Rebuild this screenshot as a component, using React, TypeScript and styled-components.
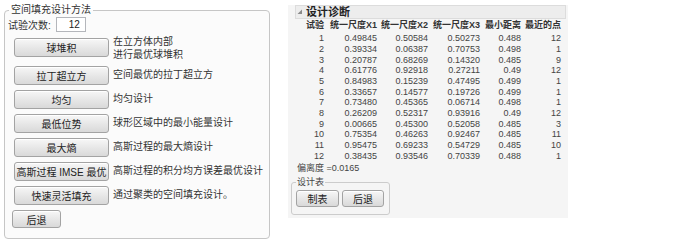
import React from "react";
import styled, { createGlobalStyle } from "styled-components";

const Global = createGlobalStyle`
  html, body { margin: 0; padding: 0; background: #ffffff; }
  body {
    font-family: "Liberation Sans", "Noto Sans CJK SC", sans-serif;
    font-size: 10px;
    color: #333;
  }
`;

const Page = styled.div`
  display: flex;
  align-items: flex-start;
  width: 700px;
  height: 245px;
`;

const MethodBox = styled.fieldset`
  box-sizing: border-box;
  width: 266px;
  margin: 3px 0 0 4px;
  padding: 0 3px 10px 3px;
  border: 1px solid #c6c6c6;
  border-radius: 4px;
  background: #fbfbfb;
  min-width: 0;
`;

const Legend = styled.legend<{ $size?: number }>`
  margin-left: 1px;
  padding: 0 2px;
  font-size: ${(p) => p.$size ?? 10}px;
  line-height: ${(p) => (p.$size ?? 10) + 4}px;
  color: #333;
`;

const CountRow = styled.div`
  display: flex;
  align-items: center;
  height: 15px;
  gap: 5px;
`;

const CountLabel = styled.span`
  font-size: 10px;
  color: #333;
`;

const CountInput = styled.div`
  box-sizing: border-box;
  width: 30px;
  height: 15px;
  border: 1px solid #b4b6bb;
  background: #fff;
  text-align: right;
  padding-right: 5px;
  line-height: 13px;
  font-size: 10px;
  color: #222;
`;

const Methods = styled.div`
  display: grid;
  grid-template-columns: 95px 1fr;
  column-gap: 4px;
  row-gap: 5px;
  margin: 4px 0 0 6px;
`;

const Btn = styled.div<{ $w?: number; $h?: number; $top?: number }>`
  box-sizing: border-box;
  width: ${(p) => p.$w ?? 95}px;
  height: ${(p) => p.$h ?? 19}px;
  margin-top: ${(p) => p.$top ?? 0}px;
  align-self: ${(p) => (p.$top ? "start" : "center")};
  border: 1px solid #a3a3a3;
  border-radius: 3px;
  background: linear-gradient(#f7f7f7, #e6e6e6 55%, #d9d9d9);
  box-shadow: inset 0 1px 0 #ffffff;
  display: flex;
  align-items: center;
  justify-content: center;
  white-space: nowrap;
  overflow: visible;
  font-size: 10px;
  color: #222;
`;

const Desc = styled.div`
  align-self: center;
  line-height: 12.5px;
  font-size: 10px;
  color: #333;
  white-space: nowrap;
`;

const BackBtn = styled(Btn)`
  margin: 5px 0 0 4px;
`;

const Report = styled.section`
  box-sizing: border-box;
  width: 280px;
  height: 213px;
  margin: 5px 0 0 18px;
  background: #f5f5f5;
  display: flex;
  flex-direction: column;
`;

const HeaderBar = styled.div`
  box-sizing: border-box;
  margin-left: 7px;
  width: 271px;
  height: 14px;
  background: #ededed;
  border: 1px solid #dcdcdc;
  display: flex;
  align-items: center;
  gap: 2px;
`;

const Title = styled.span`
  font-size: 11px;
  font-weight: bold;
  color: #222;
  line-height: 12px;
`;

const Table = styled.div`
  display: grid;
  grid-template-columns: 24px 53px 51px 52px 41px 40px;
  grid-template-rows: 13.4px;
  grid-auto-rows: 10.66px;
  justify-items: end;
  margin: 1px 0 0 12px;
`;

const HeadCell = styled.div`
  font-size: 9px;
  font-weight: bold;
  line-height: 11px;
  color: #333;
  white-space: nowrap;
  align-self: start;
`;

const Cell = styled.div`
  font-size: 9px;
  line-height: 10.66px;
  color: #444;
  white-space: nowrap;
`;

const Discrepancy = styled.div`
  margin: 2px 0 0 9px;
  font-size: 9px;
  line-height: 10px;
  color: #444;
`;

const TableBox = styled.fieldset`
  box-sizing: border-box;
  width: 99px;
  margin: 4px 0 0 3px;
  padding: 0 4px 7px 4px;
  border: 1px solid #cccccc;
  border-radius: 3px;
  min-width: 0;
`;

const SmallLegend = styled.legend`
  margin-left: 0;
  padding: 0 1px;
  font-size: 9px;
  line-height: 10px;
  color: #444;
`;

const BtnRow = styled.div`
  display: flex;
  gap: 3px;
  margin-top: 3px;
`;

const Disclosure = () => (
  <svg width="8" height="8" viewBox="0 0 8 8">
    <path d="M6 1.5 L6 6 L1.5 6 Z" fill="#8a8a8a" />
  </svg>
);

const methods: { name: string; desc: string[] }[] = [
  { name: "球堆积", desc: ["在立方体内部", "进行最优球堆积"] },
  { name: "拉丁超立方", desc: ["空间最优的拉丁超立方"] },
  { name: "均匀", desc: ["均匀设计"] },
  { name: "最低位势", desc: ["球形区域中的最小能量设计"] },
  { name: "最大熵", desc: ["高斯过程的最大熵设计"] },
  { name: "高斯过程 IMSE 最优", desc: ["高斯过程的积分均方误差最优设计"] },
  { name: "快速灵活填充", desc: ["通过聚类的空间填充设计。"] },
];

const rows: string[][] = [
  ["1", "0.49845", "0.50584", "0.50273", "0.488", "12"],
  ["2", "0.39334", "0.06387", "0.70753", "0.498", "1"],
  ["3", "0.20787", "0.68269", "0.14320", "0.485", "9"],
  ["4", "0.61776", "0.92918", "0.27211", "0.49", "12"],
  ["5", "0.84983", "0.15239", "0.47495", "0.499", "1"],
  ["6", "0.33657", "0.14577", "0.19726", "0.499", "1"],
  ["7", "0.73480", "0.45365", "0.06714", "0.498", "1"],
  ["8", "0.26209", "0.52317", "0.93916", "0.49", "12"],
  ["9", "0.00665", "0.45300", "0.52058", "0.485", "3"],
  ["10", "0.75354", "0.46263", "0.92467", "0.485", "11"],
  ["11", "0.95475", "0.69233", "0.54729", "0.485", "10"],
  ["12", "0.38435", "0.93546", "0.70339", "0.488", "1"],
];

const headers = ["试验", "统一尺度X1", "统一尺度X2", "统一尺度X3", "最小距离", "最近的点"];

export default function App() {
  return (
    <>
      <Global />
      <Page>
        <MethodBox>
          <Legend>空间填充设计方法</Legend>
          <CountRow>
            <CountLabel>试验次数:</CountLabel>
            <CountInput>12</CountInput>
          </CountRow>
          <Methods>
            {methods.map((m) => (
              <React.Fragment key={m.name}>
                <Btn $top={m.desc.length > 1 ? 2 : 0}>{m.name}</Btn>
                <Desc>
                  {m.desc.map((d) => (
                    <div key={d}>{d}</div>
                  ))}
                </Desc>
              </React.Fragment>
            ))}
          </Methods>
          <BackBtn $w={49} $h={18}>后退</BackBtn>
        </MethodBox>

        <Report>
          <HeaderBar>
            <Disclosure />
            <Title>设计诊断</Title>
          </HeaderBar>
          <Table>
            {headers.map((h) => (
              <HeadCell key={h}>{h}</HeadCell>
            ))}
            {rows.map((r) =>
              r.map((c, j) => <Cell key={r[0] + "-" + j}>{c}</Cell>)
            )}
          </Table>
          <Discrepancy>偏离度 =0.0165</Discrepancy>
          <TableBox>
            <SmallLegend>设计表</SmallLegend>
            <BtnRow>
              <Btn $w={43} $h={17}>制表</Btn>
              <Btn $w={42} $h={17}>后退</Btn>
            </BtnRow>
          </TableBox>
        </Report>
      </Page>
    </>
  );
}
